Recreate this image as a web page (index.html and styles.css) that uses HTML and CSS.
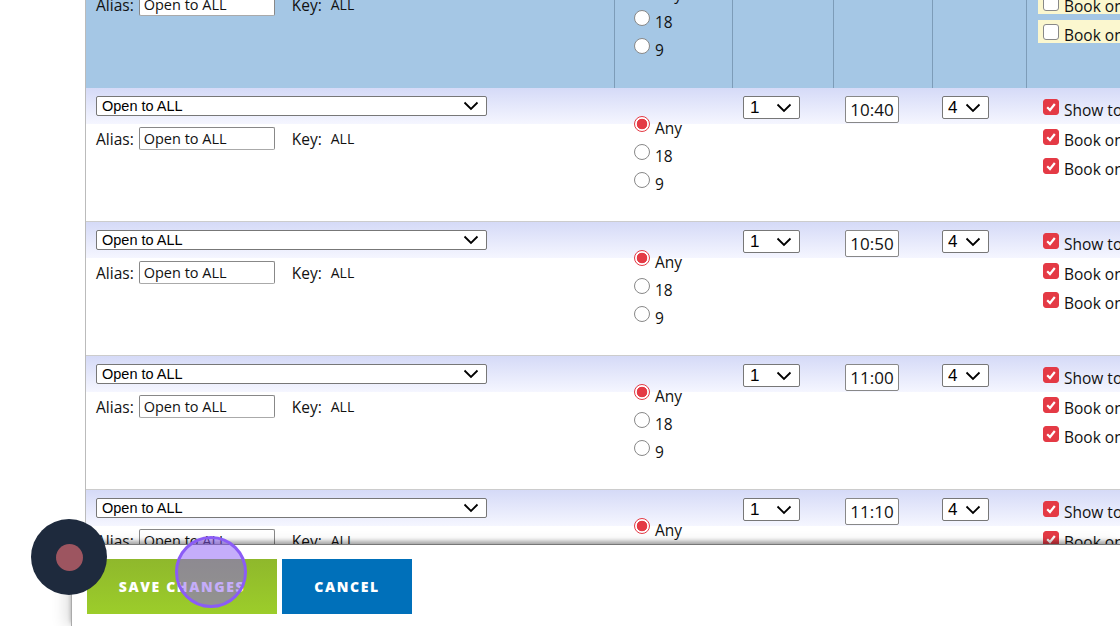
FILE: index.html
```html
<!DOCTYPE html>
<html>
<head>
    <title>Tee Sheet Setup</title>
    <meta name="viewport" content="width=device-width, initial-scale=1.0">
    <link rel="stylesheet" href="styles.css">
</head>
<body>
    <div class="sheet">
        <div class="row row-blue">
            <div class="cell cell-name">
                <select class="sel sel-wide"><option>Open to ALL</option></select>
                <div class="alias-line"><label>Alias:</label><input class="alias" value="Open to ALL"><span class="key-label">Key:</span><span class="key-val">ALL</span></div>
            </div>
            <div class="cell cell-holes">
                <label class="radio"><input type="radio" name="h0" checked><span>Any</span></label>
                <label class="radio"><input type="radio" name="h0"><span>18</span></label>
                <label class="radio"><input type="radio" name="h0"><span>9</span></label>
            </div>
            <div class="cell cell-num"><select class="sel sel-num"><option>1</option></select></div>
            <div class="cell cell-time"><input class="time" value="10:30"></div>
            <div class="cell cell-size"><select class="sel sel-size"><option>4</option></select></div>
            <div class="cell cell-opts">
                <label class="opt"><input type="checkbox"><span>Show to members</span></label>
                <label class="opt"><input type="checkbox"><span>Book online</span></label>
                <label class="opt"><input type="checkbox"><span>Book on mobile</span></label>
            </div>
        </div>
        <div class="row">
            <div class="cell cell-name">
                <select class="sel sel-wide"><option>Open to ALL</option></select>
                <div class="alias-line"><label>Alias:</label><input class="alias" value="Open to ALL"><span class="key-label">Key:</span><span class="key-val">ALL</span></div>
            </div>
            <div class="cell cell-holes">
                <label class="radio"><input type="radio" name="h1" checked><span>Any</span></label>
                <label class="radio"><input type="radio" name="h1"><span>18</span></label>
                <label class="radio"><input type="radio" name="h1"><span>9</span></label>
            </div>
            <div class="cell cell-num"><select class="sel sel-num"><option>1</option></select></div>
            <div class="cell cell-time"><input class="time" value="10:40"></div>
            <div class="cell cell-size"><select class="sel sel-size"><option>4</option></select></div>
            <div class="cell cell-opts">
                <label class="opt"><input type="checkbox" checked><span>Show to members</span></label>
                <label class="opt"><input type="checkbox" checked><span>Book online</span></label>
                <label class="opt"><input type="checkbox" checked><span>Book on mobile</span></label>
            </div>
        </div>
        <div class="row">
            <div class="cell cell-name">
                <select class="sel sel-wide"><option>Open to ALL</option></select>
                <div class="alias-line"><label>Alias:</label><input class="alias" value="Open to ALL"><span class="key-label">Key:</span><span class="key-val">ALL</span></div>
            </div>
            <div class="cell cell-holes">
                <label class="radio"><input type="radio" name="h2" checked><span>Any</span></label>
                <label class="radio"><input type="radio" name="h2"><span>18</span></label>
                <label class="radio"><input type="radio" name="h2"><span>9</span></label>
            </div>
            <div class="cell cell-num"><select class="sel sel-num"><option>1</option></select></div>
            <div class="cell cell-time"><input class="time" value="10:50"></div>
            <div class="cell cell-size"><select class="sel sel-size"><option>4</option></select></div>
            <div class="cell cell-opts">
                <label class="opt"><input type="checkbox" checked><span>Show to members</span></label>
                <label class="opt"><input type="checkbox" checked><span>Book online</span></label>
                <label class="opt"><input type="checkbox" checked><span>Book on mobile</span></label>
            </div>
        </div>
        <div class="row">
            <div class="cell cell-name">
                <select class="sel sel-wide"><option>Open to ALL</option></select>
                <div class="alias-line"><label>Alias:</label><input class="alias" value="Open to ALL"><span class="key-label">Key:</span><span class="key-val">ALL</span></div>
            </div>
            <div class="cell cell-holes">
                <label class="radio"><input type="radio" name="h3" checked><span>Any</span></label>
                <label class="radio"><input type="radio" name="h3"><span>18</span></label>
                <label class="radio"><input type="radio" name="h3"><span>9</span></label>
            </div>
            <div class="cell cell-num"><select class="sel sel-num"><option>1</option></select></div>
            <div class="cell cell-time"><input class="time" value="11:00"></div>
            <div class="cell cell-size"><select class="sel sel-size"><option>4</option></select></div>
            <div class="cell cell-opts">
                <label class="opt"><input type="checkbox" checked><span>Show to members</span></label>
                <label class="opt"><input type="checkbox" checked><span>Book online</span></label>
                <label class="opt"><input type="checkbox" checked><span>Book on mobile</span></label>
            </div>
        </div>
        <div class="row">
            <div class="cell cell-name">
                <select class="sel sel-wide"><option>Open to ALL</option></select>
                <div class="alias-line"><label>Alias:</label><input class="alias" value="Open to ALL"><span class="key-label">Key:</span><span class="key-val">ALL</span></div>
            </div>
            <div class="cell cell-holes">
                <label class="radio"><input type="radio" name="h4" checked><span>Any</span></label>
                <label class="radio"><input type="radio" name="h4"><span>18</span></label>
                <label class="radio"><input type="radio" name="h4"><span>9</span></label>
            </div>
            <div class="cell cell-num"><select class="sel sel-num"><option>1</option></select></div>
            <div class="cell cell-time"><input class="time" value="11:10"></div>
            <div class="cell cell-size"><select class="sel sel-size"><option>4</option></select></div>
            <div class="cell cell-opts">
                <label class="opt"><input type="checkbox" checked><span>Show to members</span></label>
                <label class="opt"><input type="checkbox" checked><span>Book online</span></label>
                <label class="opt"><input type="checkbox" checked><span>Book on mobile</span></label>
            </div>
        </div>
    </div>
    <div class="footer">
        <button class="btn btn-save">SAVE CHANGES</button>
        <button class="btn btn-cancel">CANCEL</button>
    </div>
    <div class="rec-btn"><div class="rec-dot"></div></div>
    <div class="cursor-ring"></div>
</body>
</html>
```

FILE: styles.css
```css
* {
    box-sizing: border-box;
}
body {
    margin: 0;
    height: 626px;
    overflow: hidden;
    background: white;
    font-family: "Open Sans", "Noto Sans", sans-serif;
    color: #111;
    position: relative;
}
.sheet {
    height: 544px;
    margin-left: 85px;
    overflow: hidden;
    display: flex;
    flex-direction: column;
    border-left: 1px solid #bbb;
}
.row {
    flex: none;
    height: 134px;
    display: grid;
    grid-template-columns: 529px 118px 101px 99px 94px 94px;
    border-bottom: 1px solid #ccc;
    background: linear-gradient(#d5daf7, #f5f6ff) 0 0 / 100% 36px no-repeat, white;
}
.row-blue {
    margin-top: -46px;
    background: #a5c7e5;
    border-bottom: none;
    margin-left: -1px;
    border-left: 1px solid #7f99b3;
}
.row-blue .cell {
    border-right: 1px solid #7d9cb8;
}
.row-blue .cell-opts {
    border-right: none;
}
.cell {
    min-width: 0;
    padding-top: 8px;
}
.cell-name {
    padding-left: 10px;
}
.cell-holes {
    padding: 28px 0 0 19px;
}
.cell-num {
    padding-left: 10px;
}
.cell-time {
    padding-left: 11px;
}
.cell-size {
    padding-left: 9px;
}
.cell-opts {
    padding: 7px 0 0 11px;
    overflow: hidden;
}
.sel {
    display: block;
    appearance: none;
    background: white url("data:image/svg+xml,%3Csvg xmlns='http://www.w3.org/2000/svg' width='16' height='10'%3E%3Cpath d='M1.5 1.5 8 8l6.5-6.5' fill='none' stroke='%23000' stroke-width='1.8'/%3E%3C/svg%3E") no-repeat;
    border: 1px solid #777;
    border-radius: 2px;
    color: #000;
    font-family: "Liberation Sans", Arial, sans-serif;
    font-size: 14.5px;
    margin: 0;
}
.sel-wide {
    width: 391px;
    height: 20px;
    padding: 0 0 0 5px;
    background-position: right 7px center;
}
.sel-num, .sel-size {
    height: 23px;
    font-size: 17px;
    padding: 0 0 0 6px;
    background-position: right 7px center;
}
.sel-num {
    width: 57px;
}
.sel-size {
    width: 47px;
    padding-left: 5px;
}
.alias-line {
    display: flex;
    align-items: center;
    margin-top: 11px;
    font-size: 15.5px;
}
.alias {
    width: 136px;
    height: 23px;
    margin: 0 0 0 5px;
    padding: 0 4px;
    border: 1px solid #888;
    border-bottom-color: #aaa;
    border-radius: 2px;
    background: white;
    font-family: "Open Sans", "Noto Sans", sans-serif;
    font-size: 14.5px;
    color: #111;
}
.key-label {
    margin-left: 17px;
}
.key-val {
    margin-left: 9px;
    font-size: 14px;
}
.radio {
    display: flex;
    align-items: flex-start;
    height: 28px;
    font-size: 15.5px;
}
.radio span {
    margin: 1px 0 0 5px;
}
.radio input {
    appearance: none;
    width: 16px;
    height: 16px;
    margin: 0;
    border: 1px solid #888;
    border-radius: 50%;
    background: white;
}
.radio input:checked {
    border: 1px solid #e43a45;
    background: radial-gradient(circle, #e43a45 0 5px, white 5.6px);
}
.time {
    display: block;
    width: 54px;
    height: 27px;
    margin: 0;
    padding: 0;
    border: 1px solid #888;
    border-radius: 2px;
    background: white;
    font-family: "Open Sans", "Noto Sans", sans-serif;
    font-size: 17px;
    color: #111;
    text-align: center;
}
.opt {
    display: flex;
    align-items: flex-start;
    width: 82px;
    height: 23px;
    margin-bottom: 6.5px;
    padding: 1px 0 0 5px;
    font-size: 15.5px;
    white-space: nowrap;
    overflow: hidden;
}
.row-blue .opt {
    background: #fbf7cf;
}
.opt span {
    margin: 3px 0 0 5px;
}
.opt input {
    appearance: none;
    flex: none;
    width: 16px;
    height: 16px;
    margin: 3px 0 0;
    border: 1px solid #888;
    border-radius: 3px;
    background: white;
}
.opt input:checked {
    border-color: #e43a45;
    background: #e43a45 url("data:image/svg+xml,%3Csvg xmlns='http://www.w3.org/2000/svg' width='14' height='14'%3E%3Cpath d='M3.2 7.2 6 10l4.8-6' fill='none' stroke='%23fff' stroke-width='2.2'/%3E%3C/svg%3E") no-repeat center;
}
.footer {
    height: 82px;
    margin-left: 71px;
    padding: 14px 0 0 15px;
    display: flex;
    gap: 5px;
    align-items: flex-start;
    background: white;
    border-top: 1px solid #777;
    border-left: 1px solid #aaa;
    box-shadow: 0 -3px 4px rgba(0, 0, 0, 0.3), -6px 0 14px rgba(0, 0, 0, 0.12);
    position: relative;
}
.btn {
    height: 55px;
    border: none;
    margin: 0;
    padding: 0;
    color: white;
    font-family: "Open Sans", "Noto Sans", sans-serif;
    font-weight: 800;
    font-size: 14px;
    letter-spacing: 1.6px;
}
.btn-save {
    width: 190px;
    background: linear-gradient(#8fb82c, #9ccd2a);
}
.btn-cancel {
    width: 130px;
    background: #0070ba;
}
.rec-btn {
    position: absolute;
    left: 31px;
    top: 519px;
    width: 76px;
    height: 76px;
    border-radius: 50%;
    background: #1e2a3d;
    display: flex;
    align-items: center;
    justify-content: center;
}
.rec-dot {
    width: 27px;
    height: 27px;
    border-radius: 50%;
    background: #9d5560;
}
.cursor-ring {
    position: absolute;
    left: 175px;
    top: 536px;
    width: 72px;
    height: 72px;
    border-radius: 50%;
    border: 3px solid #8b5cf6;
    background: rgba(139, 92, 246, 0.5);
}
```
